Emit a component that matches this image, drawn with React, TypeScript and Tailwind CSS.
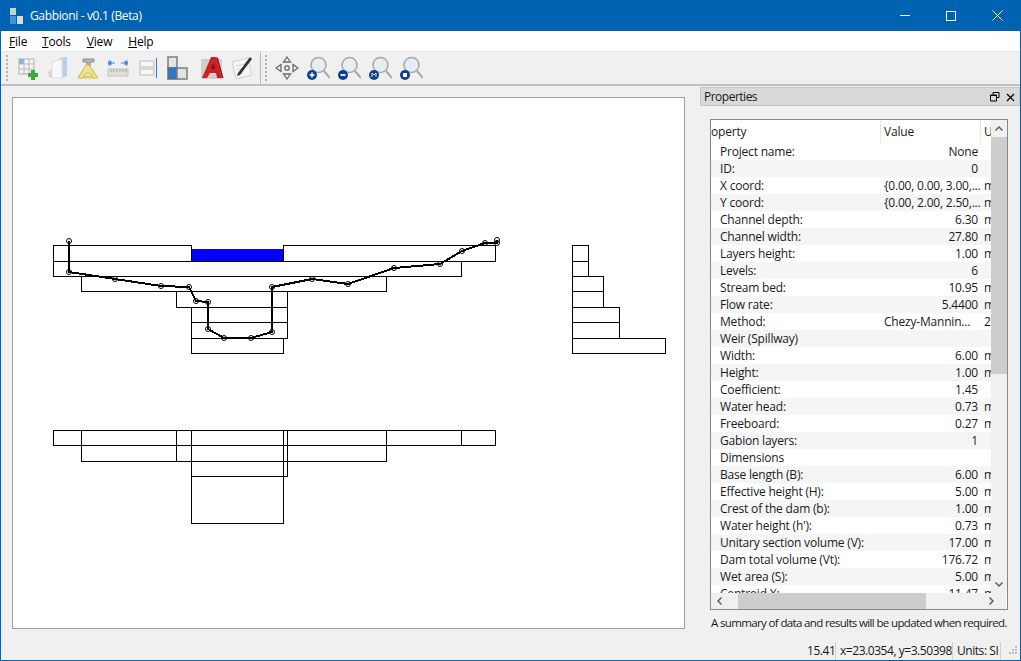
import { ReactNode } from 'react'

const rows: [string, string, string][] = [
  ['Project name:', 'None', ''],
  ['ID:', '0', ''],
  ['X coord:', '{0.00, 0.00, 3.00,...', 'm'],
  ['Y coord:', '{0.00, 2.00, 2.50,...', 'm'],
  ['Channel depth:', '6.30', 'm'],
  ['Channel width:', '27.80', 'm'],
  ['Layers height:', '1.00', 'm'],
  ['Levels:', '6', ''],
  ['Stream bed:', '10.95', 'm'],
  ['Flow rate:', '5.4400', 'm'],
  ['Method:', 'Chezy-Mannin...', '2'],
  ['Weir (Spillway)', '', ''],
  ['Width:', '6.00', 'm'],
  ['Height:', '1.00', 'm'],
  ['Coefficient:', '1.45', ''],
  ['Water head:', '0.73', 'm'],
  ['Freeboard:', '0.27', 'm'],
  ['Gabion layers:', '1', ''],
  ['Dimensions', '', ''],
  ['Base length (B):', '6.00', 'm'],
  ['Effective height (H):', '5.00', 'm'],
  ['Crest of the dam (b):', '1.00', 'm'],
  ["Water height (h'):", '0.73', 'm'],
  ['Unitary section volume (V):', '17.00', 'm'],
  ['Dam total volume (Vt):', '176.72', 'm'],
  ['Wet area (S):', '5.00', 'm'],
  ['Centroid X:', '11.47', 'm'],
]

const profile =
  '69,241 69,272 115,279 161,286 189,287 196,301 208,302 208,329 224,338 251,338 272,332 272,287 312,279 348,284 394,268 440,264 462,251 485,243 497,243 497,240'

// x0, y0, x1, y1 in screen pixels, the svg viewBox lines up with them
const boxes = [
  [53, 245, 191, 261],
  [283, 245, 495, 261],
  [53, 261, 461, 276],
  [81, 276, 386, 291],
  [176, 291, 287, 307],
  [191, 307, 287, 322],
  [191, 322, 287, 338],
  [191, 338, 283, 353],
  [572, 245, 588, 261],
  [572, 261, 588, 276],
  [572, 276, 603, 291],
  [572, 291, 603, 307],
  [572, 307, 619, 322],
  [572, 322, 619, 338],
  [572, 338, 665, 353],
  [53, 430, 495, 445],
  [81, 430, 176, 445],
  [176, 430, 191, 445],
  [191, 430, 283, 445],
  [283, 430, 287, 445],
  [287, 430, 386, 445],
  [386, 430, 461, 445],
  [81, 445, 386, 461],
  [176, 445, 191, 461],
  [191, 445, 283, 461],
  [283, 445, 287, 461],
  [191, 461, 287, 476],
  [191, 461, 283, 476],
  [191, 476, 283, 523],
]

function Drawing() {
  return (
    <svg viewBox="13 98 671 530" className="block h-[530px] w-[671px]">
      <rect x="191" y="249" width="92" height="12" fill="#0000ff" />
      {boxes.map(([x0, y0, x1, y1], i) => (
        <rect
          key={i}
          x={x0 + 0.5}
          y={y0 + 0.5}
          width={x1 - x0}
          height={y1 - y0}
          fill="none"
          stroke="#000"
          strokeWidth="1"
          shapeRendering="crispEdges"
        />
      ))}
      <polyline points={profile} fill="none" stroke="#000" strokeWidth="2" shapeRendering="crispEdges" />
      {profile.split(' ').map((p) => {
        const [cx, cy] = p.split(',')
        return <circle key={p} cx={cx} cy={cy} r="2.5" fill="none" stroke="#000" strokeWidth="1" />
      })}
    </svg>
  )
}

function Tool({ children }: { children: ReactNode }) {
  return (
    <svg width="24" height="24" viewBox="0 0 24 24" className="shrink-0">
      {children}
    </svg>
  )
}

function Grip() {
  return (
    <div className="mr-[7px] flex h-[26px] w-[3px] shrink-0 flex-col justify-between">
      {[0, 1, 2, 3, 4, 5, 6].map((i) => (
        <div key={i} className="h-[2px] w-[2px] bg-[#b4b4b4]" />
      ))}
    </div>
  )
}

function Zoom({ mark }: { mark: ReactNode }) {
  return (
    <Tool>
      <line x1="18" y1="15" x2="24" y2="22" stroke="#a8a8a8" strokeWidth="2" />
      <circle cx="12.500" cy="9" r="7.500" fill="#e4eef6" stroke="#a9a9a9" strokeWidth="1.600" />
      <circle cx="6" cy="19" r="5" fill="#0d3f8c" />
      {mark}
    </Tool>
  )
}

function Toolbar() {
  return (
    <div className="flex h-[34px] shrink-0 items-center border-b-2 border-[#c0c0c0] bg-[#f0f0f0] pl-[5px]">
      <Grip />
      <div className="flex items-center gap-[6px]">
        <Tool>
          <rect x="3" y="3" width="15" height="15" fill="#f4f4f4" stroke="#b0b0b0" />
          <path d="M3 8h15M3 13h15M8 3v15M13 3v15" stroke="#b8b8b8" />
          <rect x="3" y="3" width="5" height="5" fill="#8fb4e4" />
          <path d="M15 14h4v3h3v4h-3v3h-4v-3h-3v-4h3z" fill="#3faa3c" />
        </Tool>
        <Tool>
          <path d="M13 2l8-1v19l-8 3z" fill="#b8d0ea" />
          <path d="M6 6l10-3v19l-10 0z" fill="#f8f8f8" stroke="#dedede" />
          <path d="M2 16l4-3v9l-3-1z" fill="#d8d8d8" />
        </Tool>
        <Tool>
          <path d="M7 3h11v3h-4v14h-3V6H7z" fill="#b5b5b5" stroke="#8c8c8c" />
          <path d="M2 22L10 9l3 0 9 13z" fill="#f3e38a" stroke="#cdb94a" />
          <path d="M7 20a6 6 0 0 1 10 0z" fill="#fbf8df" stroke="#cdb94a" />
        </Tool>
        <Tool>
          <path d="M4 7h5M2 7l3-2v4zM15 7h5M22 7l-3-2v4z" fill="#3f8ae0" stroke="#3f8ae0" />
          <path d="M3 4v6M21 4v6" stroke="#3f8ae0" />
          <rect x="2" y="13" width="20" height="7" fill="#dedede" stroke="#c4c4c4" />
          <path d="M5 13v3M8 13v3M11 13v3M14 13v3M17 13v3M20 13v3" stroke="#a8a8a8" />
        </Tool>
        <Tool>
          <rect x="4" y="5" width="14" height="6" fill="#f6f6f6" stroke="#bcbcbc" />
          <rect x="4" y="13" width="14" height="6" fill="#f6f6f6" stroke="#bcbcbc" />
          <path d="M20.500 2v20" stroke="#4078c8" />
        </Tool>
        <Tool>
          <rect x="2" y="1" width="9" height="11" fill="#e4e4e4" stroke="#7d7d7d" strokeWidth="1.500" />
          <rect x="2" y="12" width="9" height="11" fill="#2f78c4" stroke="#5a6f8a" strokeWidth="1.500" />
          <rect x="11" y="12" width="10" height="11" fill="#e4e4e4" stroke="#7d7d7d" strokeWidth="1.500" />
        </Tool>
        <div className="ml-[4px]">
          <Tool>
            <rect x="1" y="3" width="21" height="20" fill="#cfcfcf" />
            <path d="M2 22L11 1h5l6 21h-5l-1-5h-6l-3 5z" fill="#cf1f26" />
            <path d="M11 13h4l-1.500-6z" fill="#7c0f14" />
            <path d="M16 1l6 21h1.500L18 2z" fill="#8c1418" />
          </Tool>
        </div>
        <Tool>
          <path d="M2 6l16-4 4 17-16 4z" fill="#f5f5f5" stroke="#d0d0d0" />
          <path d="M6 10l8-2M7 14l6-1.500M8 18l5-1" stroke="#d8d8d8" />
          <path d="M20 1l2 2-12 16-3 1 1-3z" fill="#333" />
        </Tool>
      </div>
      <div className="ml-[6px] mr-[4px] h-[32px] w-px bg-[#b8b8b8]" />
      <Grip />
      <div className="flex items-center gap-[7px]">
        <Tool>
          <g fill="none" stroke="#6a6a6a" strokeWidth="1.300">
            <path d="M12 1l3.500 5h-7z" />
            <path d="M12 23l3.500-5h-7z" />
            <path d="M1 12l5-3.500v7z" />
            <path d="M23 12l-5-3.500v7z" />
            <circle cx="12" cy="12" r="2.200" />
          </g>
        </Tool>
        <Zoom mark={<path d="M6 16.500v5M3.500 19h5" stroke="#fff" strokeWidth="1.600" />} />
        <Zoom mark={<path d="M3.500 19h5" stroke="#fff" strokeWidth="1.800" />} />
        <Zoom mark={<path d="M4 21v-4l2 2 2-2v4" fill="none" stroke="#dfe8ff" />} />
        <Zoom mark={<rect x="4" y="17" width="4" height="4" fill="#fff" />} />
      </div>
    </div>
  )
}

function PropertiesTable() {
  return (
    <div className="relative h-[491px] overflow-hidden border border-[#828790] bg-white">
      {/* header, first column is scrolled a bit to the right */}
      <div className="flex h-[23px] items-center">
        <div className="w-[170px] overflow-hidden border-r border-[#e5e5e5] leading-[23px]">operty</div>
        <div className="w-[100px] border-r border-[#e5e5e5] pl-[3px] leading-[23px]">Value</div>
        <div className="pl-[3px]">U</div>
      </div>
      <div className="w-[280px]">
        {rows.map(([name, value, unit], i) => (
          <div key={name} className={`flex h-[17px] items-center leading-[17px] ${i % 2 ? 'bg-[#f5f5f5]' : 'bg-white'}`}>
            <div className="w-[171px] shrink-0 whitespace-nowrap pl-[9px]">{name}</div>
            <div className={`w-[100px] shrink-0 whitespace-nowrap pr-[4px] ${value.startsWith('{') || value.startsWith('Chezy') ? 'text-left pl-[2px]' : 'text-right'}`}>
              {value}
            </div>
            <div className="w-[9px] overflow-hidden pl-[2px]">{unit}</div>
          </div>
        ))}
      </div>
      {/* vertical scrollbar */}
      <div className="absolute right-0 top-0 flex h-[473px] w-[16px] flex-col bg-[#f0f0f0]">
        <svg width="16" height="17" viewBox="0 0 16 17" className="shrink-0">
          <path d="M4.500 10.500l3.500-3.500 3.500 3.500" fill="none" stroke="#606060" strokeWidth="1.500" />
        </svg>
        <div className="h-[237px] bg-[#cdcdcd]" />
        <div className="flex-1" />
        <svg width="16" height="17" viewBox="0 0 16 17" className="shrink-0">
          <path d="M4.500 6.500l3.500 3.500 3.500-3.500" fill="none" stroke="#606060" strokeWidth="1.500" />
        </svg>
      </div>
      {/* horizontal scrollbar */}
      <div className="absolute bottom-0 left-0 right-[1px] flex h-[16px] bg-[#f0f0f0]">
        <svg width="27" height="16" viewBox="0 0 27 16" className="shrink-0">
          <path d="M10.500 4.500l-3.500 3.500 3.500 3.500" fill="none" stroke="#606060" strokeWidth="1.500" />
        </svg>
        <div className="w-[188px] bg-[#cdcdcd]" />
        <div className="flex-1" />
        <svg width="27" height="16" viewBox="0 0 27 16" className="shrink-0">
          <path d="M10.500 4.500l3.500 3.500-3.500 3.500" fill="none" stroke="#606060" strokeWidth="1.500" />
        </svg>
      </div>
    </div>
  )
}

export default function App() {
  return (
    <div className="flex h-[661px] w-[1021px] flex-col overflow-hidden border border-t-0 border-[#0063b1] bg-[#f0f0f0] font-['Open_Sans','Noto_Sans',sans-serif] text-[12px] tracking-[-0.2px] text-[#1a1a1a]">
      {/* title bar */}
      <div className="flex h-[31px] shrink-0 items-center bg-[#0063b1] text-white">
        <svg width="14" height="16" viewBox="0 0 14 16" className="ml-[9px] mr-[6px] shrink-0">
          <rect x="0" y="0" width="6" height="7" fill="#c8d2dc" />
          <rect x="0" y="8" width="6" height="8" fill="#4d8fd0" />
          <rect x="7" y="8" width="6" height="8" fill="#d8dde2" />
        </svg>
        <span className="tracking-[-0.35px]">Gabbioni - v0.1 (Beta)</span>
        <div className="ml-auto flex h-full">
          <div className="flex w-[46px] items-center justify-center">
            <div className="h-px w-[10px] bg-white" />
          </div>
          <div className="flex w-[46px] items-center justify-center">
            <div className="h-[10px] w-[10px] border border-white" />
          </div>
          <div className="flex w-[46px] items-center justify-center">
            <svg width="11" height="11" viewBox="0 0 11 11">
              <path d="M.5.500l10 10M10.500.500l-10 10" stroke="#fff" />
            </svg>
          </div>
        </div>
      </div>
      {/* menu bar */}
      <div className="flex h-[21px] shrink-0 items-center gap-[16px] border-b border-[#e8e8e8] bg-white pl-[8px] pt-[1px] text-black">
        <span className="w-[17px]"><u>F</u>ile</span>
        <span><u>T</u>ools</span>
        <span><u>V</u>iew</span>
        <span><u>H</u>elp</span>
      </div>
      <Toolbar />
      {/* main */}
      <div className="flex min-h-0 flex-1">
        <div className="flex-1 pl-[11px] pt-[11px]">
          <div className="h-[532px] w-[673px] border border-[#a0a0a0] bg-white">
            <Drawing />
          </div>
        </div>
        <div className="mt-[1px] flex w-[320px] shrink-0 flex-col">
          <div className="flex h-[19px] items-center justify-between border border-[#c4c4c4] bg-[#d9d9d9] pl-[3px] pr-[4px] pt-[1px]">
            <span className="tracking-[-0.5px]">Properties</span>
            <div className="flex items-center gap-[6px]">
              <svg width="10" height="10" viewBox="0 0 10 10">
                <path d="M3 2.500V.500h6v5H7M.500 3h6v6h-6z" fill="none" stroke="#000" />
                <path d="M0 3.500h7" stroke="#000" />
              </svg>
              <svg width="9" height="9" viewBox="0 0 9 9">
                <path d="M1 1l7 7M8 1l-7 7" stroke="#000" strokeWidth="1.300" />
              </svg>
            </div>
          </div>
          <div className="pl-[10px] pr-[12px] pt-[13px]">
            <PropertiesTable />
            <div className="mt-[4px] whitespace-nowrap pl-px text-[11.5px] leading-[17px] tracking-[-0.64px]">
              A summary of data and results will be updated when required.
            </div>
          </div>
        </div>
      </div>
      {/* status bar */}
      <div className="flex h-[22px] shrink-0 items-center justify-end pt-[3px] tracking-[-0.45px]">
        <span className="w-[29px] border-r border-[#d0d0d0] leading-[17px]">15.41</span>
        <span className="w-[117px] border-r border-[#d0d0d0] pl-[4px] leading-[17px] whitespace-nowrap">x=23.0354, y=3.50398</span>
        <span className="w-[48px] border-r border-[#d0d0d0] pl-[4px] leading-[17px] whitespace-nowrap">Units: SI</span>
        <svg width="19" height="14" viewBox="0 0 19 14" className="shrink-0">
          <g fill="#bdbdbd">
            <rect x="14" y="2" width="2" height="2" />
            <rect x="11" y="5" width="2" height="2" />
            <rect x="14" y="5" width="2" height="2" />
            <rect x="8" y="8" width="2" height="2" />
            <rect x="11" y="8" width="2" height="2" />
            <rect x="14" y="8" width="2" height="2" />
          </g>
        </svg>
      </div>
    </div>
  )
}
